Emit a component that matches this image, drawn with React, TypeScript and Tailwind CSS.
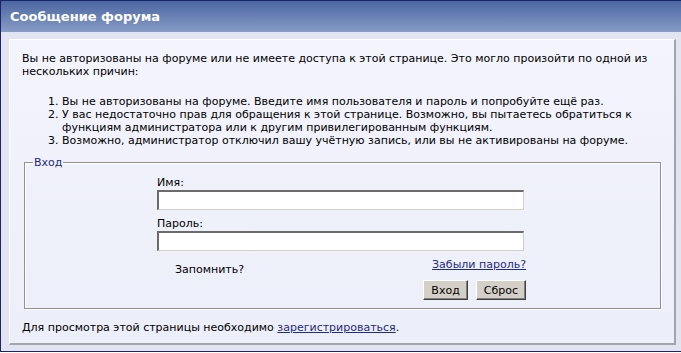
export default function App(): React.ReactElement {
  return (
    <div className="w-[681px] h-[353px] bg-white font-['DejaVu_Sans',Verdana,sans-serif] text-[11px] leading-[13px] text-black">
      <div className="h-[352px] flex flex-col border-l border-t border-b border-[#1b2468] bg-[#e2e5f1]">
        <div className="h-[31px] shrink-0 flex items-center pl-[9px] bg-gradient-to-b from-[#4c66a2] to-[#879cc6] text-[13px] font-bold text-white">
          Сообщение форума
        </div>

        <div className="flex-1 pl-[8px] pr-[5px] pt-[7px] pb-[6px]">
          <div className="h-full flex flex-col bg-gradient-to-b from-[#f3f4fc] to-[#eceef9] border-t border-l border-white border-r-2 border-b-2 border-r-[#a2a4ab] border-b-[#a2a4ab] pl-[12px] pr-[10px] pt-[12px]">
            <p>
              Вы не авторизованы на форуме или не имеете доступа к этой странице. Это могло произойти по одной из
              нескольких причин:
            </p>

            <ol className="list-decimal pl-[40px] mt-[17px]">
              <li>Вы не авторизованы на форуме. Введите имя пользователя и пароль и попробуйте ещё раз.</li>
              <li>
                У вас недостаточно прав для обращения к этой странице. Возможно, вы пытаетесь обратиться к функциям
                администратора или к другим привилегированным функциям.
              </li>
              <li>Возможно, администратор отключил вашу учётную запись, или вы не активированы на форуме.</li>
            </ol>

            <fieldset className="mt-[9px] ml-[2px] w-[637px] border border-[#919191] shadow-[inset_1px_1px_0_#fff,1px_1px_0_#fff] pb-[8px]">
              <legend className="ml-[8px] px-[1px] text-[#1c2a82]">Вход</legend>

              <div className="ml-[132px] w-[369px] pt-[7px]">
                <label className="block">Имя:</label>
                <input
                  type="text"
                  className="block mt-[1px] w-[367px] h-[20px] bg-white border-t-2 border-l-2 border-t-[#6b6b6b] border-l-[#6b6b6b] border-b border-r border-b-[#d4d0c8] border-r-[#d4d0c8] outline-none"
                />

                <label className="block mt-[7px]">Пароль:</label>
                <input
                  type="password"
                  className="block mt-[1px] w-[367px] h-[20px] bg-white border-t-2 border-l-2 border-t-[#6b6b6b] border-l-[#6b6b6b] border-b border-r border-b-[#d4d0c8] border-r-[#d4d0c8] outline-none"
                />

                <div className="flex justify-between mt-[7px]">
                  <span className="pl-[18px] mt-[5px]">Запомнить?</span>
                  <a href="#" className="underline text-[#1f2c80]">Забыли пароль?</a>
                </div>

                <div className="flex justify-end gap-[8px] mt-[4px]">
                  <button className="h-[20px] px-[7px] bg-[#d4d0c8] border border-t-white border-l-white border-b-[#404040] border-r-[#404040] shadow-[inset_-1px_-1px_0_#808080] text-[11px]">
                    Вход
                  </button>
                  <button className="h-[20px] px-[7px] bg-[#d4d0c8] border border-t-white border-l-white border-b-[#404040] border-r-[#404040] shadow-[inset_-1px_-1px_0_#808080] text-[11px]">
                    Сброс
                  </button>
                </div>
              </div>
            </fieldset>

            <p className="mt-[12px]">
              Для просмотра этой страницы необходимо{' '}
              <a href="#" className="underline text-[#1f2c80]">зарегистрироваться</a>.
            </p>
          </div>
        </div>
      </div>
    </div>
  );
}
